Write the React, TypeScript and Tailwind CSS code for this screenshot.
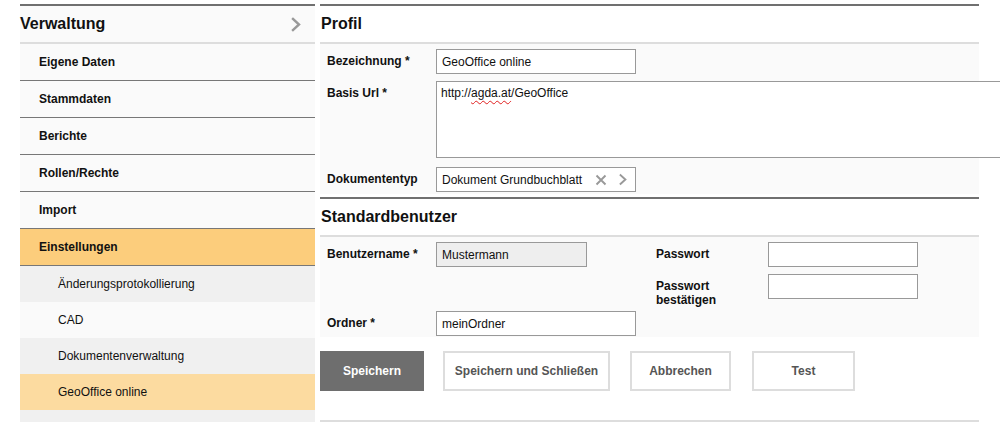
import React from 'react';

const font = { fontFamily: '"Liberation Sans", Arial, sans-serif' };

function Chevron({ className }: { className?: string }) {
  return (
    <svg viewBox="0 0 10 14" className={className} fill="none" stroke="currentColor" strokeWidth="2.4" strokeLinecap="square">
      <path d="M2 1.5 L8 7 L2 12.5" />
    </svg>
  );
}

function Cross({ className }: { className?: string }) {
  return (
    <svg viewBox="0 0 12 12" className={className} fill="none" stroke="currentColor" strokeWidth="1.9">
      <path d="M1.5 1.5 L10.5 10.5 M10.5 1.5 L1.5 10.5" />
    </svg>
  );
}

const mainItems = ['Eigene Daten', 'Stammdaten', 'Berichte', 'Rollen/Rechte', 'Import'];
const subItems = [
  { label: 'Änderungsprotokollierung', bg: 'bg-[#f0f0f0]' },
  { label: 'CAD', bg: 'bg-[#fafafa]' },
  { label: 'Dokumentenverwaltung', bg: 'bg-[#f0f0f0]' },
  { label: 'GeoOffice online', bg: 'bg-[#fcdba0]' },
];

function Sidebar() {
  return (
    <div className="w-[295px] shrink-0 bg-[#fafafa] border-t-2 border-[#707070] flex flex-col">
      <div className="h-[38px] shrink-0 flex items-center justify-between border-b-2 border-[#dddddd] bg-[#fafafa]">
        <span className="text-[16px] font-bold text-[#111]">Verwaltung</span>
        <Chevron className="w-[10px] h-[15px] mr-[14px] text-[#999]" />
      </div>
      {mainItems.map((item) => (
        <div key={item} className="h-[37px] shrink-0 flex items-center pl-[19px] border-b border-[#777] text-[12px] font-bold text-[#111]">
          {item}
        </div>
      ))}
      <div className="h-[37px] shrink-0 flex items-center pl-[19px] border-b border-[#777] bg-[#fccd7c] text-[12px] font-bold text-[#111]">
        Einstellungen
      </div>
      {subItems.map((s) => (
        <div key={s.label} className={`h-[36px] shrink-0 flex items-center pl-[38px] text-[12px] text-[#111] ${s.bg}`}>
          {s.label}
        </div>
      ))}
      <div className="flex-1 bg-[#f0f0f0]" />
    </div>
  );
}

function Label({ children, className = '' }: { children: React.ReactNode; className?: string }) {
  return <div className={`pt-[5px] text-[12px] leading-[14px] font-bold text-[#111] ${className}`}>{children}</div>;
}

function TextBox({ value, className = '' }: { value?: string; className?: string }) {
  return (
    <div className={`h-[25px] shrink-0 border border-[#999] px-[5px] flex items-center text-[12px] text-[#111] ${className}`}>
      {value}
    </div>
  );
}

function SectionHeader({ title }: { title: string }) {
  return (
    <div className="h-[40px] shrink-0 flex items-center pl-px border-t-2 border-[#707070] border-b-2 border-b-[#dddddd] bg-white">
      <span className="text-[16px] font-bold text-[#111]">{title}</span>
    </div>
  );
}

function Main() {
  return (
    <div className="w-[659px] shrink-0 flex flex-col">
      <SectionHeader title="Profil" />
      <div className="bg-[#fafafa] pb-[2px]">
        <div className="flex pt-[5px]">
          <Label className="w-[116px] shrink-0 pl-[7px]">Bezeichnung *</Label>
          <TextBox value="GeoOffice online" className="w-[200px] bg-white" />
        </div>
        <div className="flex pt-[7px]">
          <Label className="w-[116px] shrink-0 pl-[7px]">Basis Url *</Label>
          <div className="w-[600px] h-[77px] shrink-0 border border-[#999] bg-white px-[4px] pt-[4px] text-[12px] leading-[14px] text-[#111]">
            http://
            <span className="underline decoration-wavy decoration-[#e02020] decoration-1 underline-offset-[3px]">agda.at</span>
            /GeoOffice
          </div>
        </div>
        <div className="flex pt-[9px]">
          <Label className="w-[116px] shrink-0 pl-[7px]">Dokumententyp</Label>
          <div className="w-[200px] h-[25px] shrink-0 border border-[#999] bg-white pl-[5px] pr-[8px] flex items-center text-[12px] text-[#111]">
            <span className="flex-1">Dokument Grundbuchblatt</span>
            <Cross className="w-[12px] h-[12px] text-[#999] mr-[12px]" />
            <Chevron className="w-[8px] h-[13px] text-[#999]" />
          </div>
        </div>
      </div>
      <div className="h-[5px] bg-white" />
      <SectionHeader title="Standardbenutzer" />
      <div className="bg-[#fafafa] pb-px grid grid-cols-[116px_220px_112px_1fr]">
        <div className="pt-[5px] pl-[7px]"><Label>Benutzername *</Label></div>
        <div className="pt-[5px]"><TextBox value="Mustermann" className="w-[151px] bg-[#eeeeee]" /></div>
        <div className="pt-[5px]"><Label>Passwort</Label></div>
        <div className="pt-[5px]"><TextBox className="w-[150px] bg-white" /></div>

        <div className="pt-[7px]" />
        <div className="pt-[7px]" />
        <div className="pt-[7px]"><Label className="pt-[4px]">Passwort<br />bestätigen</Label></div>
        <div className="pt-[7px]"><TextBox className="w-[150px] bg-white" /></div>

        <div className="pt-[4px] pl-[7px]"><Label>Ordner *</Label></div>
        <div className="pt-[4px]"><TextBox value="meinOrdner" className="w-[200px] bg-white" /></div>
        <div className="pt-[4px]" />
        <div className="pt-[4px]" />
      </div>
      <div className="flex pt-[14px] text-[12px] font-bold">
        <button className="w-[104px] h-[40px] bg-[#6e6e6e] text-white">Speichern</button>
        <button className="ml-[19px] w-[167px] h-[40px] border-2 border-[#dddddd] bg-white text-[#555]">Speichern und Schließen</button>
        <button className="ml-[20px] w-[101px] h-[40px] border-2 border-[#dddddd] bg-white text-[#555]">Abbrechen</button>
        <button className="ml-[21px] w-[103px] h-[40px] border-2 border-[#dddddd] bg-white text-[#555]">Test</button>
      </div>
      <div className="mt-[29px] border-t-2 border-[#dddddd]" />
    </div>
  );
}

export default function App() {
  return (
    <div className="w-[1000px] h-[422px] overflow-hidden bg-white flex gap-[5px] pl-[20px] pt-[4px]" style={font}>
      <Sidebar />
      <Main />
    </div>
  );
}
